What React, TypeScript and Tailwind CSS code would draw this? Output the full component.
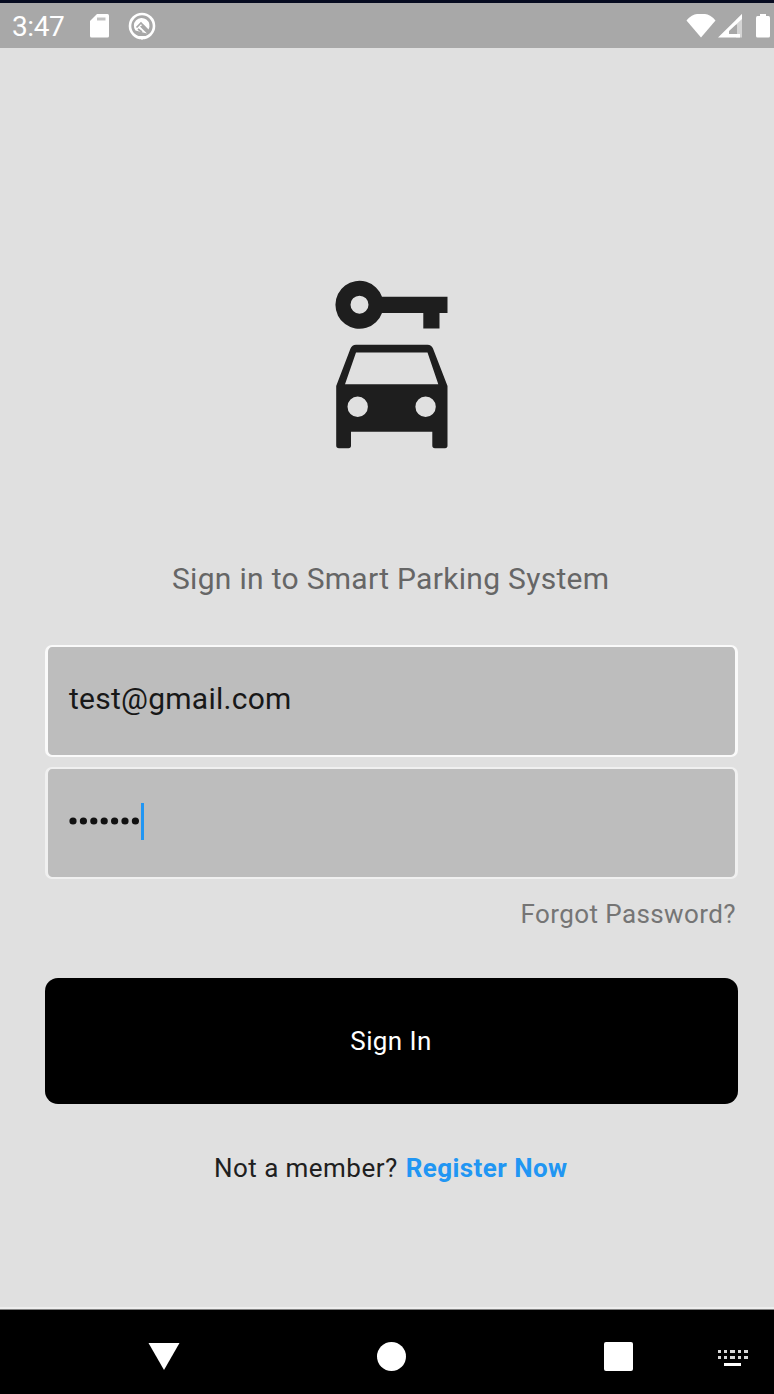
import React from "react";

function StatusBar() {
  return (
    <header className="flex h-[48px] w-full shrink-0 items-center border-t-[3px] border-[#060b20] bg-[#a8a8a8] text-white">
      <span className="ml-[12px] w-[77px] whitespace-nowrap pt-[2px] text-[28px] leading-[45px] tracking-[-0.4px]">3:47</span>
      <svg width="22" height="26" viewBox="0 0 22 26" className="shrink-0" aria-hidden="true">
        <path d="M8 1H18.5Q20 1 20 2.5V23Q20 24.500 18.500 24.500H2.500Q1 24.500 1 23V8Z" fill="white" />
        <path d="M8 4.500H16.500V7.500H8Z" fill="#a8a8a8" opacity=".7" />
      </svg>
      <svg width="30" height="30" viewBox="0 0 30 30" className="ml-[16px] shrink-0" aria-hidden="true">
        <circle cx="15" cy="15" r="12" fill="none" stroke="white" strokeWidth="2.600" />
        <path d="M8.500 19.500A7.800 7.800 0 1 1 21.500 18.500L16.500 13.500L13 15.500L20 22.500" fill="white" />
        <path d="M9.500 16.500L14 12L20.500 19M11 18L15 21" fill="none" stroke="#a8a8a8" strokeWidth="1.700" />
        <path d="M11 25L15 29L19 25Z" fill="white" />
      </svg>
      <div className="ml-auto flex items-center">
        <svg width="30" height="26" viewBox="0 0 30 26" className="shrink-0" aria-hidden="true">
          <path d="M0.500 7.500Q6 1 11 1H19Q24 1 29.500 7.500L15 24.500Z" fill="white" />
        </svg>
        <svg width="26" height="26" viewBox="0 0 26 26" className="ml-[1px] shrink-0" aria-hidden="true">
          <path d="M19 7L25 1V24.500H19Z" fill="#d4d4d4" />
          <path d="M13 21V18L20 11V21Z" fill="#a8a8a8" />
          <path d="M1 24.500L25 1V6L12 18V21H23V24.500Z" fill="white" />
        </svg>
        <svg width="19" height="26" viewBox="0 0 19 26" className="ml-[12px] shrink-0" aria-hidden="true">
          <path d="M5 1H11V3H13.500Q15 3 15 5V23Q15 24.500 13.500 24.500H2.500Q1 24.500 1 23V5Q1 3 2.500 3H5Z" fill="white" />
        </svg>
      </div>
    </header>
  );
}

function CarKeyLogo() {
  return (
    <svg width="112" height="168" viewBox="336 281 112 168" className="mt-[233px] ml-[336px] shrink-0 overflow-visible" role="img" aria-label="Smart parking">
      <path
        fill="#1e1e1e"
        fillRule="evenodd"
        d="M382 296.700H447.500V313H439.500V328.500H423.300V313H382A24 24 0 1 1 382 296.700ZM359.500 295.700A9 9 0 1 0 359.500 313.700A9 9 0 1 0 359.500 295.700Z"
      />
      <path
        fill="#1e1e1e"
        fillRule="evenodd"
        d="M356 344.700H427.500Q431.500 344.700 433 348.500L447.500 386V445.500Q447.500 448.300 445 448.300H435Q432.300 448.300 432.300 445.500V431.700H351V445.500Q351 448.300 348.500 448.300H339Q336.200 448.300 336.200 445.500V386L350.500 348.500Q352 344.700 356 344.700ZM356 352.500L345 384.300H438.300L427.500 352.500ZM357.700 396.500A10.200 10.200 0 1 0 357.700 416.900A10.200 10.200 0 1 0 357.700 396.500ZM425.600 396.500A10.200 10.200 0 1 0 425.600 416.900A10.200 10.200 0 1 0 425.600 396.500Z"
      />
    </svg>
  );
}

function NavigationBar() {
  return (
    <nav className="flex h-[85px] shrink-0 items-center border-t border-[#808080] bg-black pt-[9px]">
      <svg width="32" height="28" viewBox="0 0 32 28" className="ml-[148px] shrink-0" aria-label="Back">
        <path d="M0.500 0H31.500L16 27Z" fill="white" />
      </svg>
      <div className="ml-[197px] size-[29px] rounded-full bg-white" />
      <div className="ml-[198px] size-[29px] rounded-[2px] bg-white" />
      <svg width="32" height="18" viewBox="0 0 32 18" className="mt-[2px] ml-[84px] shrink-0" aria-label="Keyboard">
        <path d="M1 1H4V4H1ZM7 1H10V4H7ZM13 1H18V4H13ZM21 1H24V4H21ZM27 1H31V4H27ZM1 7H4V10H1ZM7 7H10V10H7ZM13 7H18V10H13ZM21 7H24V10H21ZM27 7H31V10H27Z" fill="#d8d8d8" />
        <path d="M7 14H24V17H7Z" fill="white" />
      </svg>
    </nav>
  );
}

export default function App() {
  return (
    <div className="flex h-[1394px] w-[774px] flex-col overflow-hidden bg-[#e0e0e0] font-['Roboto',sans-serif]">
      <StatusBar />
      <main className="flex min-h-0 flex-1 flex-col border-b-2 border-[#eeeeee]">
        <CarKeyLogo />
        <h1 className="mt-[110px] ml-[172px] h-[40px] whitespace-nowrap text-[30px] leading-[40px] font-normal tracking-[0.3px] text-[#666666]">
          Sign in to Smart Parking System
        </h1>
        <form className="flex flex-col">
          <div className="mt-[46px] ml-[45px] flex h-[112px] w-[693px] items-center rounded-[7px] border-x-[3px] border-y-2 border-[#fafafa] bg-[#bdbdbd] pl-[21px]">
            <span className="mb-[4px] whitespace-nowrap text-[30px] leading-[40px] tracking-[0.25px] text-[#181818]">test@gmail.com</span>
          </div>
          <div className="mt-[10px] ml-[45px] flex h-[112px] w-[693px] items-center rounded-[7px] border-x-[3px] border-y-2 border-[#f0f0f0] bg-[#bdbdbd] pl-[20px]">
            <svg width="72" height="10" viewBox="0 0 72 10" className="mb-[5px] shrink-0" aria-label="Password">
              <g fill="#111111">
                <circle cx="5" cy="5" r="3.600" />
                <circle cx="15.400" cy="5" r="3.600" />
                <circle cx="25.800" cy="5" r="3.600" />
                <circle cx="36.200" cy="5" r="3.600" />
                <circle cx="46.600" cy="5" r="3.600" />
                <circle cx="57" cy="5" r="3.600" />
                <circle cx="67.400" cy="5" r="3.600" />
              </g>
            </svg>
            <span className="mb-[4px] ml-px h-[37px] w-[3px] bg-[#2196f3]" />
          </div>
          <a className="mt-[18px] mr-[38px] h-[34px] self-end whitespace-nowrap text-[26px] leading-[34px] tracking-[0.4px] text-[#757575]">Forgot Password?</a>
          <button type="button" className="mt-[47px] ml-[45px] h-[126px] w-[693px] rounded-[13px] bg-black pr-px pb-px text-[26px] leading-[34px] tracking-[0.4px] text-white">
            Sign In
          </button>
        </form>
        <p className="mt-[47px] ml-[214px] flex h-[34px] gap-[8px] whitespace-nowrap text-[26px] leading-[34px] text-[#202020]">
          <span className="tracking-[0.45px]">Not a member?</span>
          <a className="font-bold tracking-[0.43px] text-[#2196f3]">Register Now</a>
        </p>
      </main>
      <NavigationBar />
    </div>
  );
}
